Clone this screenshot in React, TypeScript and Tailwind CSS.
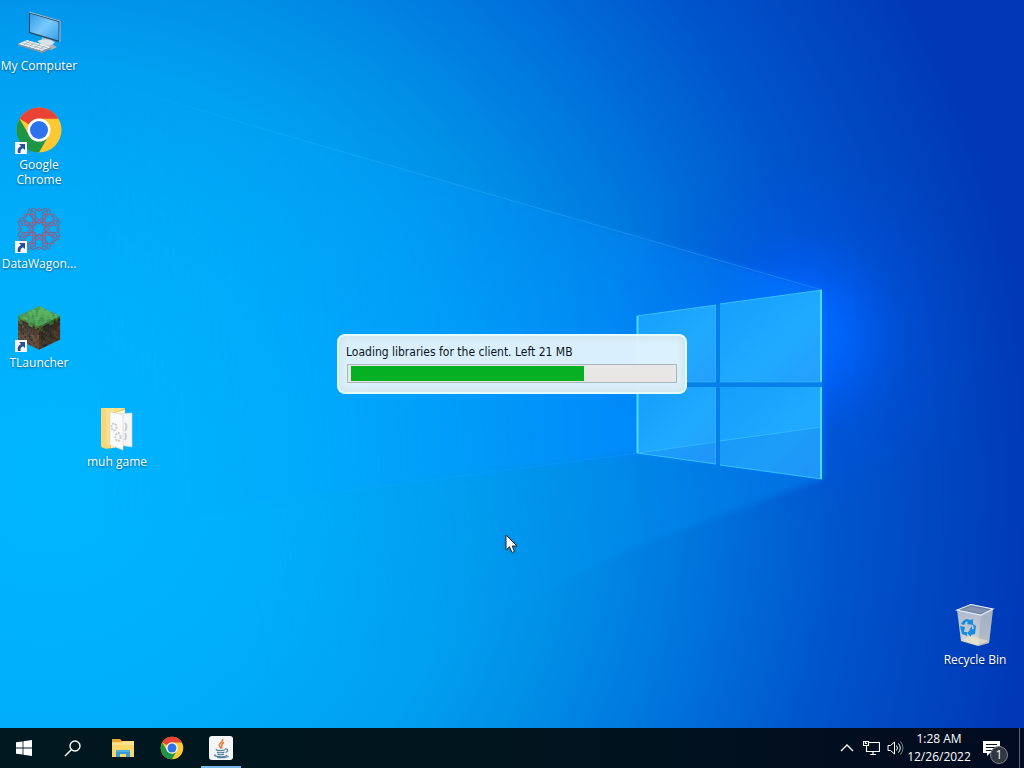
import type { ReactNode } from "react";

const UI_FONT = "font-['Open_Sans','Noto_Sans',sans-serif]";

function Wallpaper() {
  return (
    <svg
      className="absolute inset-0 h-full w-full"
      viewBox="0 0 1024 768"
      preserveAspectRatio="xMidYMid slice"
      aria-hidden="true"
    >
      <defs>
        <radialGradient id="base" gradientUnits="userSpaceOnUse" cx="50" cy="480" r="990">
          <stop offset="0" stopColor="#00b6ff" />
          <stop offset="0.25" stopColor="#00aefb" />
          <stop offset="0.42" stopColor="#00a0f2" />
          <stop offset="0.52" stopColor="#0090e8" />
          <stop offset="0.66" stopColor="#0074dc" />
          <stop offset="0.8" stopColor="#0055cc" />
          <stop offset="1" stopColor="#0038b6" />
        </radialGradient>
        <linearGradient id="beam" gradientUnits="userSpaceOnUse" x1="100" y1="400" x2="820" y2="360">
          <stop offset="0" stopColor="#00b2ff" stopOpacity="0" />
          <stop offset="0.35" stopColor="#00a2ff" stopOpacity="0.4" />
          <stop offset="0.7" stopColor="#008eff" stopOpacity="0.8" />
          <stop offset="1" stopColor="#0080ff" />
        </linearGradient>
        <linearGradient id="upper" gradientUnits="userSpaceOnUse" x1="470" y1="370" x2="530" y2="190">
          <stop offset="0" stopColor="#fff" />
          <stop offset="1" stopColor="#666" />
        </linearGradient>
        <mask id="fade" maskUnits="userSpaceOnUse" x="-60" y="0" width="1100" height="600">
          <rect x="-60" width="1100" height="600" fill="url(#upper)" />
        </mask>
        <linearGradient id="floor" gradientUnits="userSpaceOnUse" x1="250" y1="560" x2="822" y2="470">
          <stop offset="0" stopColor="#00a8f4" stopOpacity="0" />
          <stop offset="0.6" stopColor="#0090ec" stopOpacity="0.6" />
          <stop offset="1" stopColor="#0070e4" stopOpacity="0.9" />
        </linearGradient>
        <radialGradient id="halo" gradientUnits="userSpaceOnUse" cx="800" cy="335" r="190">
          <stop offset="0" stopColor="#0070ff" />
          <stop offset="0.25" stopColor="#0064ff" stopOpacity="0.85" />
          <stop offset="0.55" stopColor="#0054ee" stopOpacity="0.3" />
          <stop offset="1" stopColor="#0048d4" stopOpacity="0" />
        </radialGradient>
        <linearGradient id="pane" x1="0" y1="0" x2="1" y2="1">
          <stop offset="0" stopColor="#169efc" />
          <stop offset="0.6" stopColor="#20aaff" />
          <stop offset="1" stopColor="#249efd" />
        </linearGradient>
        <linearGradient id="ray" gradientUnits="userSpaceOnUse" x1="100" y1="80" x2="820" y2="290">
          <stop offset="0" stopColor="#38b8ff" stopOpacity="0" />
          <stop offset="0.4" stopColor="#38b0ff" stopOpacity="0.4" />
          <stop offset="1" stopColor="#2898ff" stopOpacity="0.5" />
        </linearGradient>
        <filter id="edge" x="-10%" y="-10%" width="120%" height="120%">
          <feGaussianBlur stdDeviation="3" />
        </filter>
      </defs>
      <rect width="1024" height="768" fill="url(#base)" />
      <rect width="1024" height="768" fill="url(#halo)" />
      <path d="M100 520L638 452L822 479L640 545L420 650L100 700Z" fill="url(#floor)" filter="url(#edge)" />
      <g mask="url(#fade)">
        <path d="M-60 30L260 127L822 290V479L638 453L0 536H-60Z" fill="url(#beam)" filter="url(#edge)" />
      </g>
      <path d="M100 80L260 128L822 290" fill="none" stroke="url(#ray)" />
      <path d="M260 502L638 453" fill="none" stroke="#28b4ff" strokeOpacity="0.15" />

      <path d="M637 316L822 290V479L637 453Z" fill="#0480e8" />
      <path d="M637 316L716 305V382H637Z" fill="url(#pane)" />
      <path d="M720 304L822 290V382H720Z" fill="url(#pane)" />
      <path d="M637 387H716V464L637 453Z" fill="url(#pane)" />
      <path d="M720 387H822V479L720 465Z" fill="url(#pane)" />
      <path d="M637 453L822 427V479Z" fill="#1470e8" opacity="0.22" />
      <path d="M638 453L716 442M720 441L822 427" stroke="#40c4ff" strokeOpacity="0.6" fill="none" />
      <path d="M637 316L716 305M720 304L822 290M637 453L716 464M720 465L822 479" stroke="#38c0ff" fill="none" />
      <path d="M637.500 316V382M637.500 387V453M821 290V382M821 387V479" stroke="#48dcff" strokeWidth="2" fill="none" />
      <path d="M715.500 306V382M715.500 387V463M637 382H716M720 382H822" stroke="#38b4ff" strokeOpacity="0.6" fill="none" />
    </svg>
  );
}

function ComputerIcon() {
  return (
    <svg viewBox="0 0 48 48" className="size-12" aria-hidden="true">
      <defs>
        <linearGradient id="screen" x1="0" y1="0" x2="1" y2="1">
          <stop offset="0" stopColor="#2c9cea" />
          <stop offset="0.5" stopColor="#79c8fa" />
          <stop offset="1" stopColor="#369ee8" />
        </linearGradient>
      </defs>
      <path d="M27 30L38 33L35 36L42 40L36 43L26 39Z" fill="#a8b4c0" />
      <path d="M22 34Q31 30 40 35L37 38Q28 40 22 34Z" fill="#d9e1e8" />
      <path d="M14 5L45 14L44 35L14 26Z" fill="#26445c" />
      <path d="M15 6.500L43.500 15V33.500L15 25Z" fill="url(#screen)" />
      <path d="M14 5L45 14V35" fill="none" stroke="#a3bccd" />
      <path d="M3 37L12 33L36 40L27 44Z" fill="#f0f3f6" />
      <path d="M3 37L27 44L36 40V42L27 46L3 38.500Z" fill="#8895a1" />
      <path d="M7 36L30 42.500M10 34.500L33 41M9 38L15 34M14 39.500L20 35.500M19 41L25 37.500M24 42.500L30 39" stroke="#a5b0ba" fill="none" strokeWidth="0.8" />
    </svg>
  );
}

function ChromeIcon({ className }: { className: string }) {
  return (
    <svg viewBox="0 0 48 48" className={className} aria-hidden="true">
      <circle cx="24" cy="24" r="22.500" fill="#fcc934" />
      <path d="M4.500 12.750A22.500 22.500 0 0 1 43.500 12.750H24A11.250 11.250 0 0 0 14.260 18.400Z" fill="#ea4335" />
      <path d="M4.500 12.750A22.500 22.500 0 0 0 24 46.500L33.740 29.600A11.250 11.250 0 0 1 14.260 29.600Z" fill="#1e9447" />
      <circle cx="24" cy="24" r="11.500" fill="#fff" />
      <circle cx="24" cy="24" r="9" fill="#2d73ee" />
    </svg>
  );
}

function WagonIcon() {
  const angles = [0, 45, 90, 135, 180, 225, 270, 315];
  return (
    <svg viewBox="0 0 48 48" className="size-12" aria-hidden="true">
      <g fill="none">
        {angles.map((a) => (
          <g key={a} transform={`rotate(${a} 24 24)`}>
            <path d="M24 19L15 10L17 3L24 6L31 3L33 10Z" stroke="#66709f" strokeWidth="1.200" />
            <path d="M24 3L30 9L24 15L18 9ZM20 18L28 12M28 18L20 12" stroke="#a25c82" />
          </g>
        ))}
        <circle cx="24" cy="24" r="6.500" stroke="#b8506c" strokeDasharray="3 2" />
      </g>
    </svg>
  );
}

const N = 10;
const CELLS = Array.from({ length: N * N }, (_, i) => ({
  x: i % N,
  y: Math.floor(i / N),
  n: (i * 37 + Math.floor(i / 7) * 13 + ((i * i) % 11)) % 5,
}));
const GRASS = ["#5c9a38", "#6bb044", "#528e32", "#70b648", "#62a43e"];
const DIRT = ["#7d5338", "#633d28", "#8a6040", "#523424", "#704a30"];

function BlockFace({ matrix, shade, top }: { matrix: string; shade: number; top?: boolean }) {
  return (
    <g transform={matrix}>
      {CELLS.map(({ x, y, n }) => {
        const grassy = top || y < 1 + (n % 3);
        return <rect key={`${x}-${y}`} x={x} y={y} width="1.060" height="1.060" fill={grassy ? GRASS[n] : DIRT[n]} />;
      })}
      <rect width="10" height="10" fill="#000" opacity={shade} />
    </g>
  );
}

function BlockIcon() {
  return (
    <svg viewBox="0 0 48 48" className="size-12" aria-hidden="true">
      <BlockFace matrix="matrix(2.1 1 0 2.35 3 12)" shade={0.18} />
      <BlockFace matrix="matrix(2.1 -1 0 2.35 24 22)" shade={0.4} />
      <BlockFace matrix="matrix(2.1 1 -2.1 1 24 2)" shade={0} top />
    </svg>
  );
}

function FolderIcon() {
  return (
    <svg viewBox="-1 -2 48 48" className="size-12" aria-hidden="true">
      <path d="M7 3L31 3V41L12 44L7 42Z" fill="#e9c765" />
      <path d="M8 3H31L16 9V43L8 42Z" fill="#fbe18e" />
      <path d="M16 9L31 5V40L17 43Z" fill="#fff7dc" />
      <path d="M24 9L38 8V42L25 40Z" fill="#f5f6f7" stroke="#d6dadd" strokeWidth="0.600" />
      <path d="M16 7L29 10V45L16 40Z" fill="#fbfbfb" stroke="#d2d5d8" strokeWidth="0.600" />
      <g fill="none" stroke="#c8cdd2" strokeWidth="2">
        <ellipse cx="20" cy="22" rx="2.500" ry="3.500" strokeDasharray="2 1" />
        <ellipse cx="24" cy="32" rx="2.500" ry="4" strokeDasharray="2 1" />
        <path d="M31 18Q34 22 31 26M31 28Q33 31 31 35" />
      </g>
      <path d="M7 3V41L12 43L16 42V40L13 41L12 4Z" fill="#f6d778" />
    </svg>
  );
}

function BinIcon() {
  return (
    <svg viewBox="0 0 48 48" className="size-12" aria-hidden="true">
      <defs>
        <linearGradient id="bin" x1="0" y1="0" x2="0" y2="1">
          <stop offset="0" stopColor="#a9b7cf" />
          <stop offset="0.65" stopColor="#c2c8d2" />
          <stop offset="1" stopColor="#e0dccf" />
        </linearGradient>
      </defs>
      <path d="M6 9L20 3L42 8L38 42L27 45L10 40Z" fill="url(#bin)" />
      <path d="M30 14L42 8L38 42L27 45Z" fill="#98a4ba" opacity="0.5" />
      <path d="M6 9L20 3.500L42 8L30 14Z" fill="#6a7fa9" stroke="#e2eaf5" strokeWidth="1.200" />
      <path d="M10 9L20 5.500L38 9L30 12Z" fill="#8493ad" />
      <path d="M11 39L20 35L38 40L27 44Z" fill="#ece8c9" opacity="0.6" />
      <g fill="#178bdd">
        <path d="M12 20L15 18L20 19L22 18V24L16 23L17 21L15 20.500L13 24L10 23Z" />
        <path d="M9 25L14 26L13 31L16 31V35L11 33Z" />
        <path d="M18 29L21 25V28L23 28L22 23L25 25L24 33L20 34V36L16 32L20 28Z" />
      </g>
    </svg>
  );
}

function ShortcutBadge() {
  return (
    <svg viewBox="0 0 12 12" className="absolute bottom-0 left-0 size-3" aria-hidden="true">
      <rect width="12" height="12" fill="#f6f8fb" />
      <path d="M4 2H10V8L8 6.200Q5 7.500 5.500 11H3Q1.500 6.500 6 4Z" fill="#28509a" />
    </svg>
  );
}

type DesktopItemProps = { label: string; place: string; shortcut?: boolean; children: ReactNode };

function DesktopItem({ label, place, shortcut, children }: DesktopItemProps) {
  return (
    <button type="button" className={`absolute flex w-[78px] flex-col items-center ${place}`}>
      <span className="relative block size-12">
        {children}
        {shortcut && <ShortcutBadge />}
      </span>
      <span className="mt-[3px] text-xs leading-[15px] text-white [text-shadow:0_1px_2px_rgba(0,0,0,0.5)]">{label}</span>
    </button>
  );
}

function LoadingDialog() {
  return (
    <section
      role="status"
      className="absolute top-1/2 left-1/2 flex h-[60px] w-[350px] -translate-x-1/2 -translate-y-1/2 flex-col rounded-lg border-2 border-[#e4fbff] bg-[#e6f4fe]/95 px-2 pt-2 shadow-[inset_0_0_7px_2px_#d0e3e6]"
    >
      <p id="status" className="-ml-px text-xs leading-4 whitespace-nowrap text-[#0a1420] font-['DejaVu_Sans_Condensed','DejaVu_Sans',sans-serif]">
        Loading libraries for the client. Left 21 MB
      </p>
      <div
        role="progressbar"
        aria-labelledby="status"
        aria-valuenow={72}
        aria-valuemin={0}
        aria-valuemax={100}
        className="mt-1 h-[19px] w-[330px] border border-[#aab6bd] bg-[#e8e7e6] p-px pl-[3px]"
      >
        <div className="h-[15px] bg-[#05b022]" style={{ width: "72%" }} />
      </div>
    </section>
  );
}

function Cursor() {
  return (
    <svg viewBox="0 0 14 21" className="absolute top-[534px] left-[505px] h-[21px] w-3.5 drop-shadow-sm" aria-hidden="true">
      <path d="M1 1V16L4.500 12.800L7 18.500L9.500 17.400L7.200 12H12Z" fill="#fff" stroke="#182430" />
    </svg>
  );
}

function TaskButton({ label, className = "w-12", children }: { label: string; className?: string; children: ReactNode }) {
  return (
    <button type="button" aria-label={label} className={`flex h-10 items-center justify-center ${className}`}>
      {children}
    </button>
  );
}

function Taskbar() {
  return (
    <footer className="relative flex h-10 shrink-0 items-center justify-between bg-linear-to-r from-[#001820] via-[#00141e] to-[#020b20] text-white">
      <nav className="flex" aria-label="Taskbar">
        <TaskButton label="Start">
          <svg viewBox="0 0 16 16" className="size-4" fill="#fff" aria-hidden="true">
            <path d="M0 2.300L6.600 1.400V7.600H0ZM7.400 1.300L16 0V7.600H7.400ZM0 8.400H6.600V14.600L0 13.700ZM7.400 8.400H16V16L7.400 14.700Z" />
          </svg>
        </TaskButton>
        <TaskButton label="Search">
          <svg viewBox="0 0 17 17" className="size-[17px]" fill="none" stroke="#fff" strokeWidth="1.400" aria-hidden="true">
            <circle cx="11" cy="6" r="5" />
            <path d="M7.500 9.500L1 16" />
          </svg>
        </TaskButton>
        <TaskButton label="File Explorer" className="ml-[3px] w-12">
          <svg viewBox="0 0 22 20" className="h-5 w-[22px]" aria-hidden="true">
            <path d="M0 1H8L10 3H21V19H0Z" fill="#e8a72c" />
            <path d="M0 4H22V19H0Z" fill="#fbd968" />
            <path d="M0 5L9 5L11 3H22V7H0Z" fill="#fce28b" />
            <path d="M4 19V12H18V19H14V16H8V19Z" fill="#3a9ad6" />
            <path d="M4 12H18V14H4Z" fill="#55aee0" />
          </svg>
        </TaskButton>
        <TaskButton label="Google Chrome" className="ml-px w-12">
          <ChromeIcon className="size-6" />
        </TaskButton>
        <TaskButton label="Java" className="ml-[5px] w-10 border-b-2 border-[#76b9ed] pt-0.5">
          <svg viewBox="0 0 24 24" className="size-6" aria-hidden="true">
            <rect width="24" height="24" rx="3" fill="#f3f5f6" />
            <path d="M13.500 3C15 6 9 7 10.500 10L12 12.500M15 6.500C11 8.500 13.500 10 12.500 12.500" fill="none" stroke="#e87d35" strokeWidth="1.500" />
            <g fill="none" stroke="#53829d" strokeWidth="1.200">
              <path d="M7.500 13C5.500 15 15 15 16 13.500M8 16C9 17 14 17 15.500 16M8.500 18C10 19 13.500 19 15 18M16 13C20 12.500 19 16 16.500 16.500" />
              <path d="M6.500 18.500C2 20.500 17 22 18 19M8 21.500C13 22 18 22 19.500 20" />
            </g>
          </svg>
        </TaskButton>
      </nav>
      <div className="flex h-10 items-center" aria-label="Notification area">
        <TaskButton label="Show hidden icons" className="w-6">
          <svg viewBox="0 0 14 8" className="h-2 w-3.5" fill="none" stroke="#fff" strokeWidth="1.400" aria-hidden="true">
            <path d="M1 7L7 1L13 7" />
          </svg>
        </TaskButton>
        <TaskButton label="Network" className="w-6">
          <svg viewBox="0 0 17 16" className="h-4 w-[17px]" fill="none" stroke="#fff" strokeWidth="1.200" aria-hidden="true">
            <path d="M5.500 2.500H16.500V11.500H3.500V6M7 14.500H13M10 12V14.500M1.500 1.500H5.500V5.500H.5V1.500Z" />
            <path d="M2.500 1.500V3.500H4" />
          </svg>
        </TaskButton>
        <TaskButton label="Volume" className="w-6">
          <svg viewBox="0 0 17 16" className="h-4 w-[17px]" fill="none" stroke="#fff" aria-hidden="true">
            <path d="M1 5.500H3.500L7.500 2V14L3.500 10.500H1ZM9.500 5.500Q11.500 8 9.500 10.500M11.500 3.500Q15 8 11.500 12.500" />
            <path d="M13.500 1.500Q18.500 8 13.500 14.500" stroke="#758390" />
          </svg>
        </TaskButton>
        <time dateTime="2022-12-26T01:28" className="flex w-16 flex-col items-center text-xs leading-[18px] whitespace-nowrap">
          <span>1:28 AM</span>
          <span>12/26/2022</span>
        </time>
        <TaskButton label="Notifications" className="relative ml-1 w-10">
          <svg viewBox="0 0 17 17" className="mr-2 size-[17px]" aria-hidden="true">
            <path d="M0 1H17V13H7L4 16V13H0Z" fill="#fff" />
            <path d="M3 4.500H14M3 7.500H14M3 10.500H9" stroke="#0a1424" />
          </svg>
          <span className="absolute top-[18px] left-[15px] flex size-[18px] items-center justify-center rounded-full border border-[#7c858e] bg-[#303841] text-xs">
            1
          </span>
        </TaskButton>
        <button type="button" aria-label="Show desktop" className="ml-1 h-10 w-[5px] border-l border-[#59646e]" />
      </div>
    </footer>
  );
}

export default function App() {
  return (
    <div className={`relative flex h-screen flex-col overflow-hidden bg-[#0080e0] ${UI_FONT}`}>
      <Wallpaper />
      <main className="relative flex-1">
        <DesktopItem label="My Computer" place="left-0 top-[7px]">
          <ComputerIcon />
        </DesktopItem>
        <DesktopItem label="Google Chrome" place="left-0 top-[106px]" shortcut>
          <ChromeIcon className="size-12" />
        </DesktopItem>
        <DesktopItem label="DataWagon..." place="left-0 top-[205px]" shortcut>
          <WagonIcon />
        </DesktopItem>
        <DesktopItem label="TLauncher" place="left-0 top-[304px]" shortcut>
          <BlockIcon />
        </DesktopItem>
        <DesktopItem label="muh game" place="left-[78px] top-[403px]">
          <FolderIcon />
        </DesktopItem>
        <DesktopItem label="Recycle Bin" place="right-[10px] bottom-[61px]">
          <BinIcon />
        </DesktopItem>
        <LoadingDialog />
        <Cursor />
      </main>
      <Taskbar />
    </div>
  );
}
